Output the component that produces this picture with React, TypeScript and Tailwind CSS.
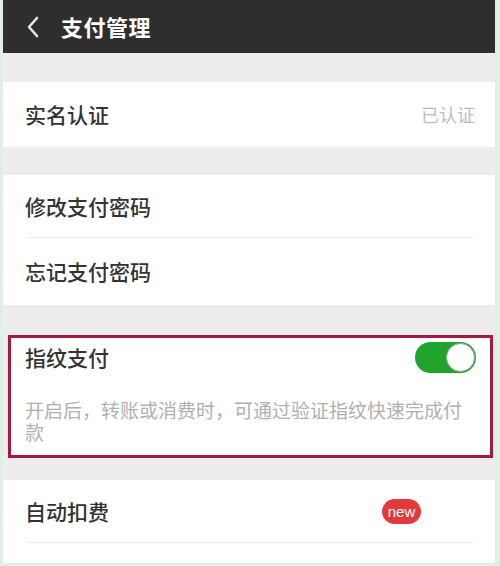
import React from "react";

const font = { fontFamily: '"Noto Sans CJK SC", "Noto Sans", sans-serif' };

function Row({ label, right, sep, h }: { label: string; right?: React.ReactNode; sep?: boolean; h: string }) {
  return (
    <div className={`relative bg-white flex items-center justify-between pl-[22px] pr-[20px] ${h}`}>
      <span className="text-[21px] leading-none text-[#333] font-medium">{label}</span>
      {right}
      {sep && <div className="absolute bottom-0 left-[25px] right-[22px] h-px bg-[#e8e8e8]" />}
    </div>
  );
}

export default function App() {
  return (
    <div className="w-[500px] h-[566px] bg-[#e1f0e4] pl-[3px] pr-[5px] pb-[3px] flex flex-col overflow-hidden" style={font}>
      <div className="flex-1 flex flex-col bg-[#ededed]">
        <div className="h-[53px] bg-[#2e2e2e] flex items-center pl-[23px]">
          <svg width="14" height="22" viewBox="0 0 14 22" fill="none">
            <path d="M11 2 L3 11 L11 20" stroke="#e8e8e8" strokeWidth="2.6" strokeLinecap="round" strokeLinejoin="round" />
          </svg>
          <span className="ml-[21px] text-[22px] text-white font-semibold tracking-[0.5px]">支付管理</span>
        </div>
        <div className="h-[29px]" />
        <Row h="h-[65px]" label="实名认证" right={<span className="text-[18px] text-[#bdbdbd]">已认证</span>} />
        <div className="h-[28px]" />
        <Row h="h-[63px]" label="修改支付密码" sep />
        <Row h="h-[67px]" label="忘记支付密码" />
        <div className="h-[30px]" />
        <div className="ml-[5px] mr-[2px] border-[3px] border-[#a8193f] bg-white pt-[4px] pb-[12px] pl-[14px] pr-[14px]">
          <div className="flex items-center justify-between h-[31px]">
            <span className="text-[21px] leading-none text-[#333] font-medium">指纹支付</span>
            <div className="w-[61px] h-[31px] rounded-full bg-[#1fa52b] relative">
              <div className="absolute right-[1px] top-[1px] w-[29px] h-[29px] rounded-full bg-white border border-[#9a9a9a]" />
            </div>
          </div>
          <p className="mt-[26px] text-[19px] leading-[22px] text-[#b0b0b0]">开启后，转账或消费时，可通过验证指纹快速完成付款</p>
        </div>
        <div className="h-[22px]" />
        <div className="flex-1 bg-white">
          <Row
            h="h-[63px]"
            label="自动扣费"
            sep
            right={
              <span className="mr-[54px] w-[39px] h-[25px] rounded-full bg-[#e23a3c] text-white text-[15px] leading-none flex items-center justify-center" style={{ fontFamily: '"Liberation Sans", sans-serif' }}>
                new
              </span>
            }
          />
        </div>
      </div>
    </div>
  );
}
